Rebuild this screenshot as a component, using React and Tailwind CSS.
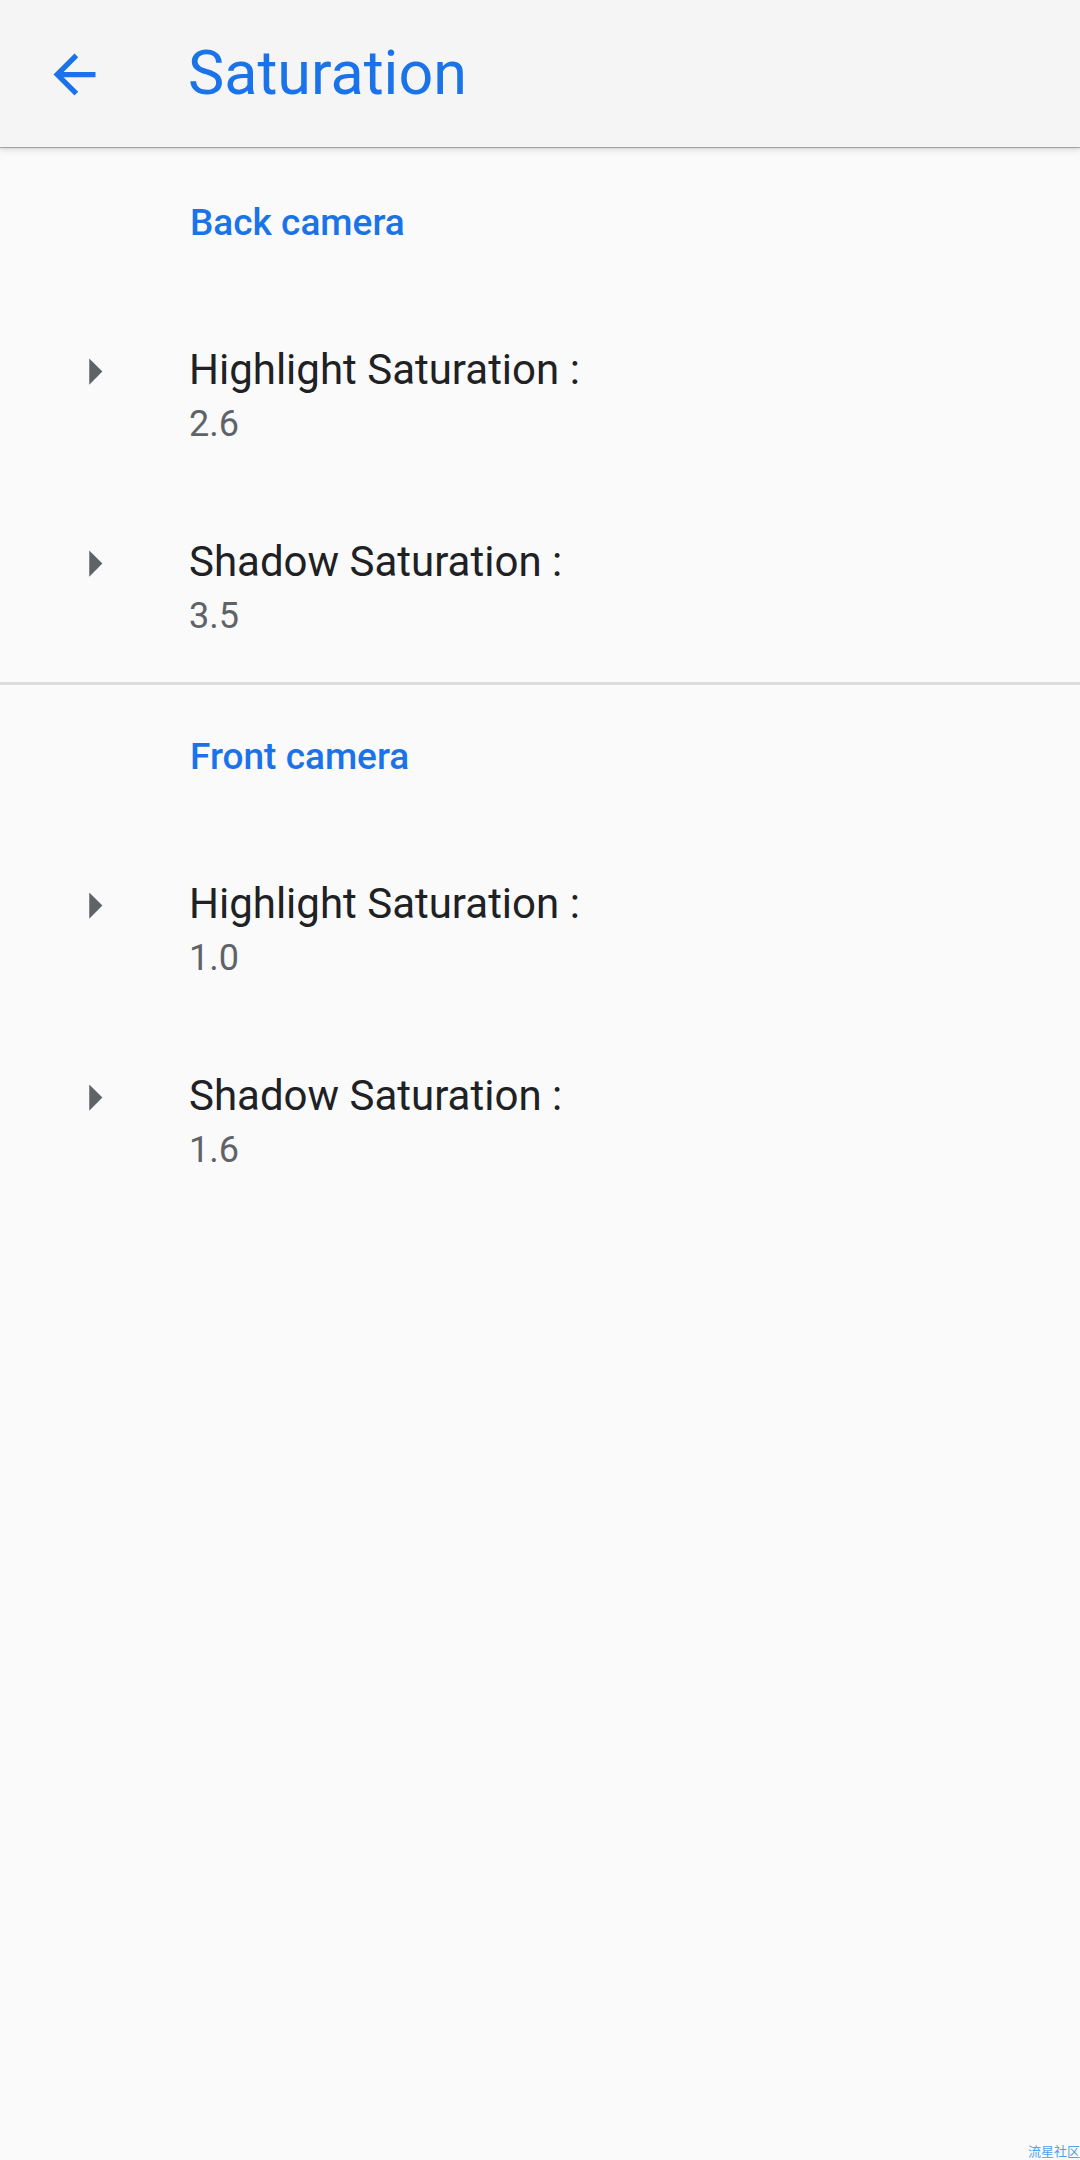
import React from 'react';

const settings = [
  {
    title: 'Back camera',
    items: [
      { label: 'Highlight Saturation :', value: '2.6' },
      { label: 'Shadow Saturation :', value: '3.5' },
    ],
  },
  {
    title: 'Front camera',
    items: [
      { label: 'Highlight Saturation :', value: '1.0' },
      { label: 'Shadow Saturation :', value: '1.6' },
    ],
  },
];

const BackArrow = () => (
  <svg viewBox="0 0 24 24" className="w-[63px] h-[63px] block" fill="#1a73e8">
    <path d="M20 11H7.83l5.59-5.59L12 4l-8 8 8 8 1.41-1.41L7.83 13H20v-2z" />
  </svg>
);

const ArrowRight = () => (
  <svg viewBox="0 0 24 24" className="w-[63px] h-[63px] block shrink-0" fill="#5f6368">
    <path d="M10 17l5-5-5-5v10z" />
  </svg>
);

const Row = ({ label, value }) => (
  <div className="flex items-start pt-[44px] pb-[40px]">
    <div className="ml-[63px] w-[63px] h-[56px] flex items-center justify-center pt-[2px]">
      <ArrowRight />
    </div>
    <div className="ml-[63px] flex flex-col">
      <span className="text-[42px] leading-[56px] text-[#202124]">{label}</span>
      <span className="text-[36px] leading-[52px] text-[#5f6368]">{value}</span>
    </div>
  </div>
);

const App = () => {
  return (
    <div
      className="relative min-h-[2160px] w-full bg-[#fafafa] overflow-hidden"
      style={{ fontFamily: 'Roboto, "Noto Sans", sans-serif' }}
    >
      {/* toolbar */}
      <header className="relative z-10 h-[147px] flex items-center bg-[#f5f5f5] shadow-[0_1px_1px_rgba(0,0,0,0.28),0_3px_6px_rgba(0,0,0,0.12)]">
        <div className="ml-[43px] pt-[1px]">
          <BackArrow />
        </div>
        <h1 className="ml-[82px] text-[61px] leading-none font-normal text-[#1a73e8]">Saturation</h1>
      </header>

      {settings.map((section, i) => (
        <section key={section.title}>
          {i > 0 && <div className="h-[3px] bg-[#dcdcdc]" />}
          <div className={`${i === 0 ? 'pt-[52px]' : 'pt-[48px]'} pb-[51px] pl-[190px]`}>
            <span className="block text-[37px] leading-[48px] font-medium text-[#1a73e8]">{section.title}</span>
          </div>
          {section.items.map((item) => (
            <Row key={item.label} label={item.label} value={item.value} />
          ))}
        </section>
      ))}

      <span
        className="absolute right-0 bottom-[3px] text-[13px] leading-none text-[#4ea2ee]"
        style={{ fontFamily: '"Noto Sans CJK SC", sans-serif' }}
      >
        流星社区
      </span>
    </div>
  );
};

export default App;
